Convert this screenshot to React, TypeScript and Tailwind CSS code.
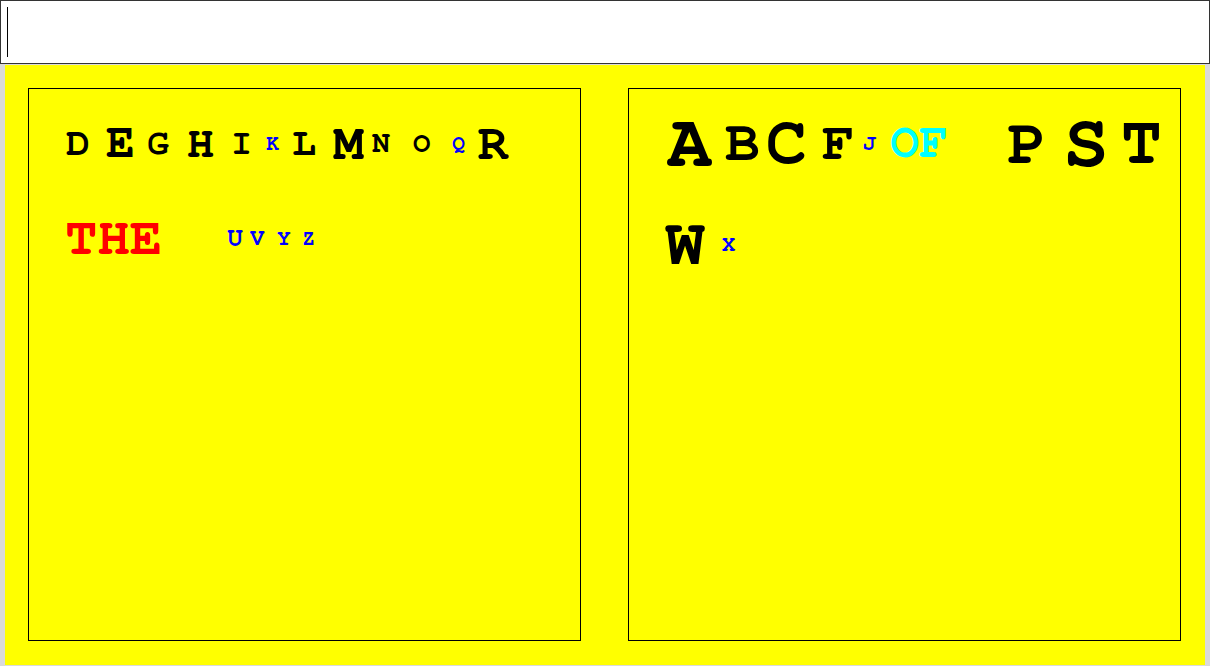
const leftTop = [
  { ch: "D", cls: "ml-[37px] w-[24px] text-[40px] text-black" },
  { ch: "E", cls: "ml-[16px] w-[29px] text-[48px] text-black" },
  { ch: "G", cls: "ml-[12px] w-[22px] text-[36px] text-black" },
  { ch: "H", cls: "ml-[18px] w-[27px] text-[45px] text-black" },
  { ch: "I", cls: "ml-[17px] w-[21px] text-[35px] text-black" },
  { ch: "K", cls: "ml-[14px] w-[13px] text-[21px] text-[#0000ff]" },
  { ch: "L", cls: "ml-[13px] w-[24px] text-[40px] text-black" },
  { ch: "M", cls: "ml-[17px] w-[31px] text-[51px] text-black" },
  { ch: "N", cls: "ml-[8px] w-[18px] text-[30px] text-black" },
  { ch: "O", cls: "ml-[23px] w-[17px] text-[29px] text-black" },
  { ch: "Q", cls: "ml-[22px] w-[13px] text-[21px] text-[#0000ff]" },
  { ch: "R", cls: "ml-[13px] w-[31px] text-[51px] text-black" },
];

const leftBottom = [
  { ch: "THE", cls: "ml-[36px] w-[97px] text-[54px] text-[#ff0000]" },
  { ch: "U", cls: "ml-[65px] w-[16px] text-[26px] text-[#0000ff]" },
  { ch: "V", cls: "ml-[7px] w-[14px] text-[24px] text-[#0000ff]" },
  { ch: "Y", cls: "ml-[13px] w-[14px] text-[23px] text-[#0000ff]" },
  { ch: "Z", cls: "ml-[11px] w-[13px] text-[21px] text-[#0000ff]" },
];

const rightTop = [
  { ch: "A", cls: "ml-[38px] w-[45px] text-[75px] text-black" },
  { ch: "B", cls: "ml-[13px] w-[35px] text-[58px] text-black" },
  { ch: "C", cls: "ml-[6px] w-[41px] text-[68px] text-black" },
  { ch: "F", cls: "ml-[15px] w-[32px] text-[54px] text-black" },
  { ch: "J", cls: "ml-[9px] w-[13px] text-[22px] text-[#0000ff]" },
  { ch: "OF", cls: "ml-[14px] w-[58px] text-[48px] text-[#00ffff]" },
  { ch: "P", cls: "ml-[59px] w-[40px] text-[65px] text-black" },
  { ch: "S", cls: "ml-[16px] w-[46px] text-[76px] text-black" },
  { ch: "T", cls: "ml-[12px] w-[41px] text-[68px] text-black" },
];

const rightBottom = [
  { ch: "W", cls: "ml-[36px] w-[40px] text-[66px] text-black" },
  { ch: "X", cls: "ml-[17px] w-[13px] text-[22px] text-[#0000ff]" },
];

type Tile = { ch: string; cls: string };

function Row({ tiles, cls }: { tiles: Tile[]; cls: string }) {
  return (
    <div className={"flex h-[60px] items-center " + cls}>
      {tiles.map((t, i) => (
        <span key={i} className={"shrink-0 whitespace-nowrap text-center font-bold leading-none " + t.cls}>
          {t.ch}
        </span>
      ))}
    </div>
  );
}

export default function App() {
  return (
    <div className="min-h-[666px] w-[1210px] bg-[#dadada] font-['FreeMono','Courier_New',monospace]">
      {/* word input */}
      <div className="flex h-[64px] w-full items-start border border-[#333] bg-white pl-[6px] pt-[6px]">
        <div className="h-[50px] w-px bg-black" />
      </div>

      {/* board */}
      <div className="mx-[5px] mt-[1px] flex h-[600px] w-[1200px] gap-[47px] bg-[#ffff00] p-[23px]">
        <div className="h-[553px] w-[553px] border border-black">
          <Row tiles={leftTop} cls="mt-[24px]" />
          <Row tiles={leftBottom} cls="mt-[35px]" />
        </div>
        <div className="h-[553px] w-[553px] border border-black">
          <Row tiles={rightTop} cls="mt-[24px]" />
          <Row tiles={rightBottom} cls="mt-[41px]" />
        </div>
      </div>
    </div>
  );
}
